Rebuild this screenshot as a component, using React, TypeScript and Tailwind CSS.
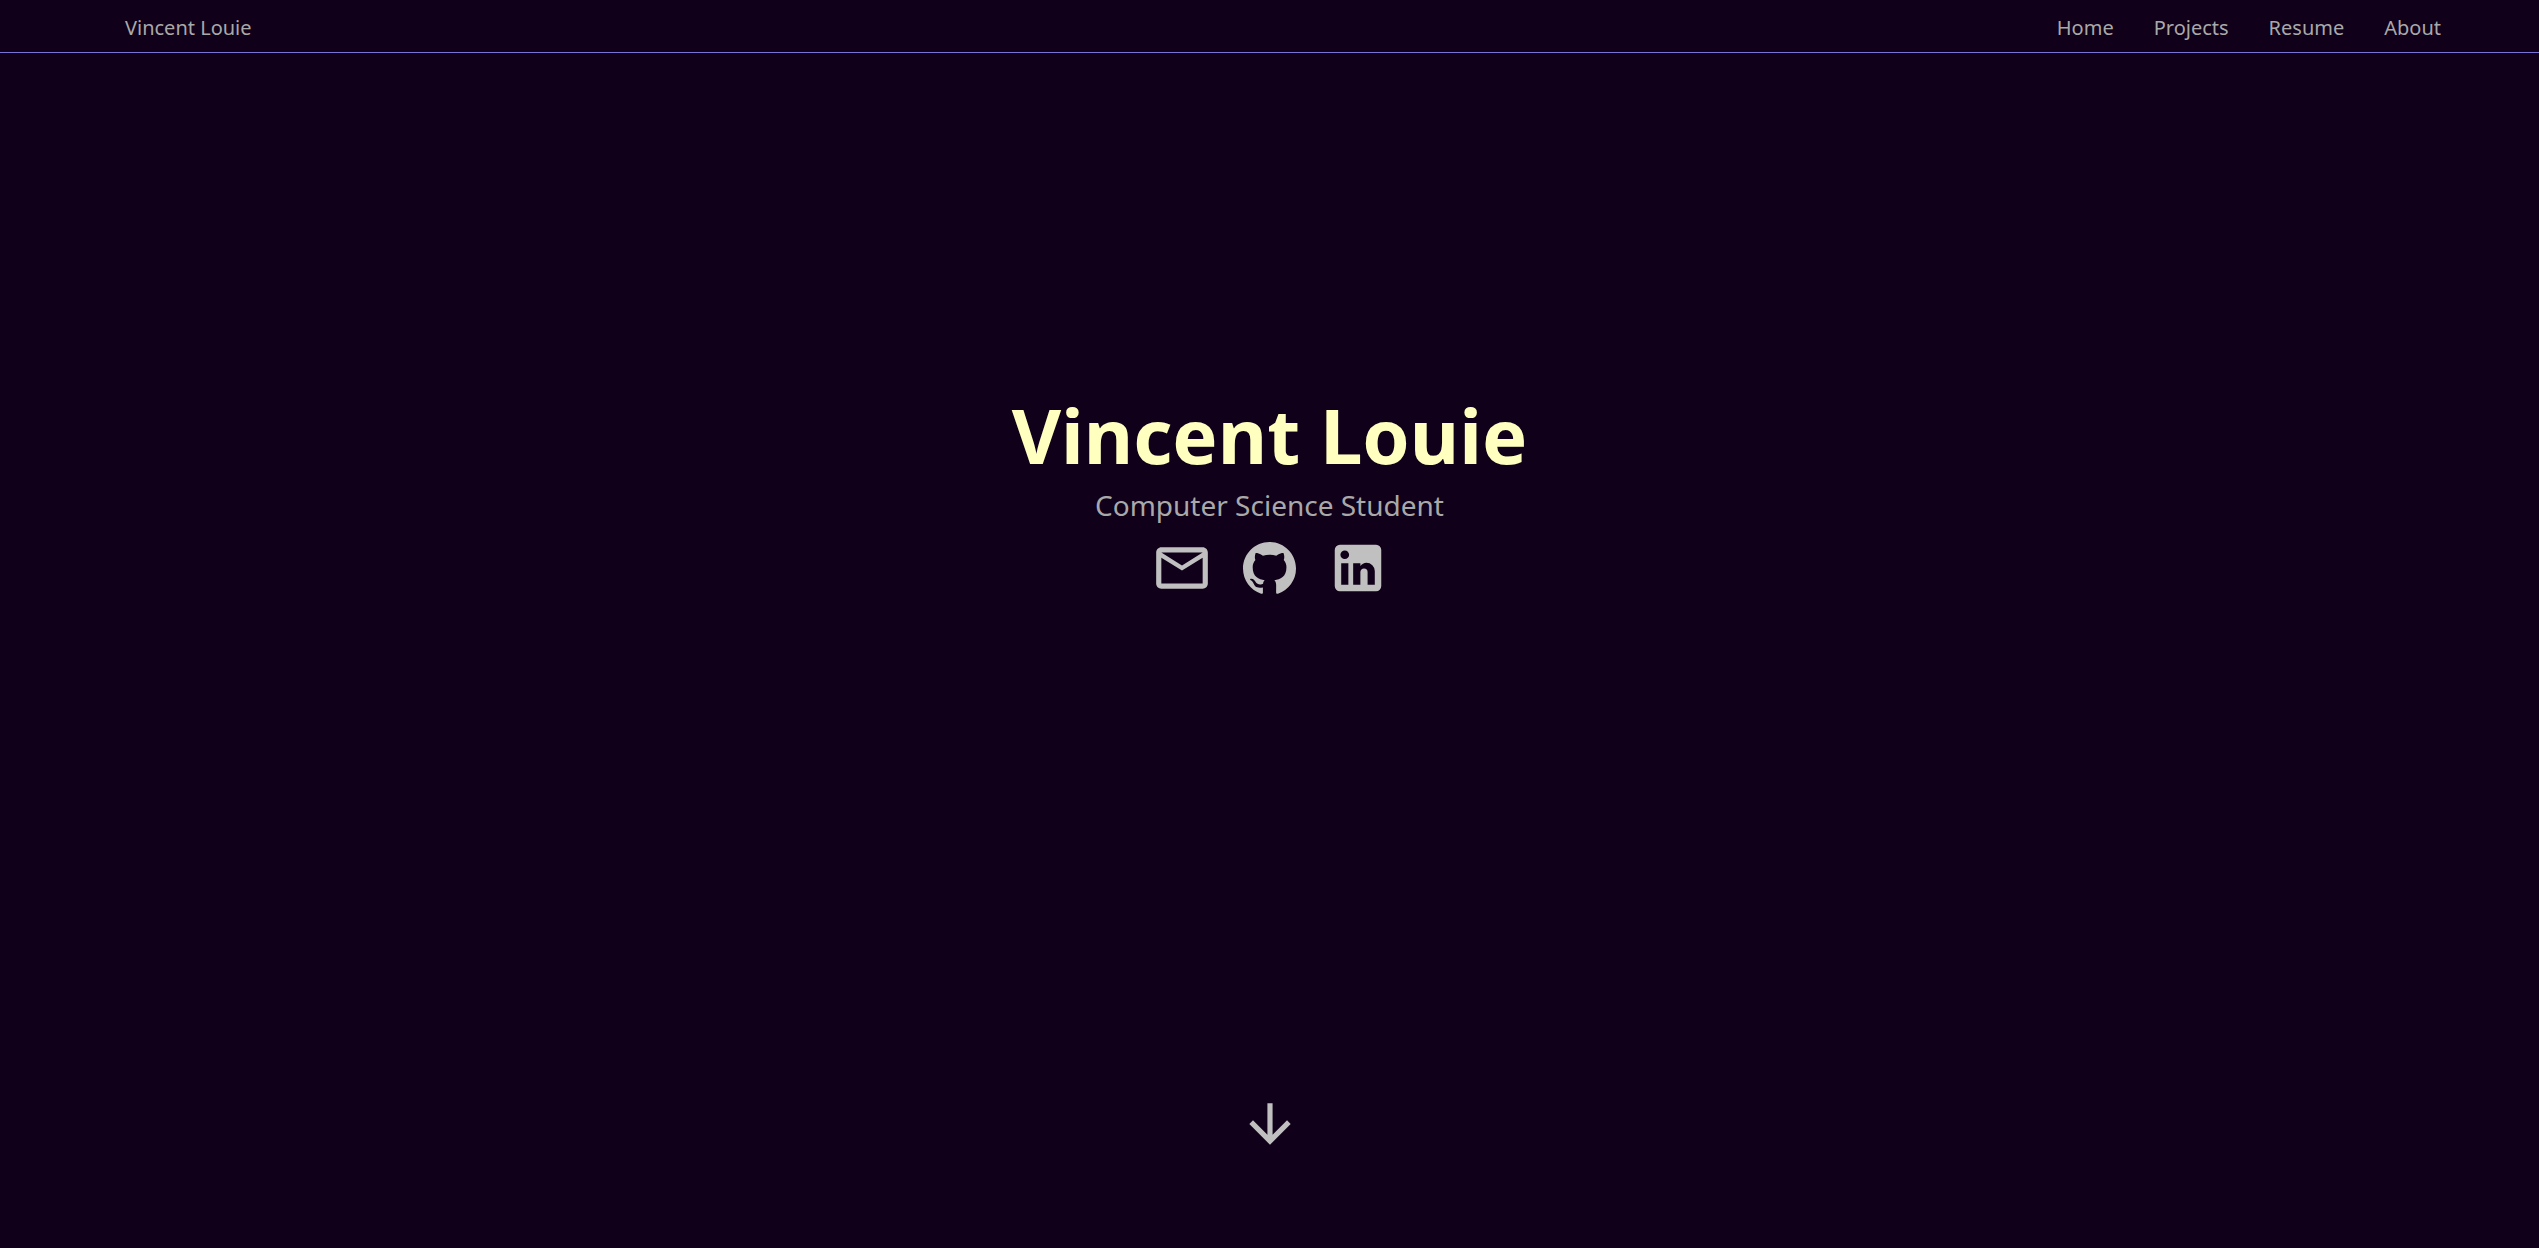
import React from "react";
import { MdMailOutline, MdArrowDownward } from "react-icons/md";
import { BsGithub } from "react-icons/bs";

const links = ["Home", "Projects", "Resume", "About"];

function LinkedinIcon({ className }: { className?: string }) {
  return (
    <svg viewBox="0 0 24 24" fill="currentColor" className={className} aria-hidden="true">
      <path d="M19 3A2 2 0 0 1 21 5V19A2 2 0 0 1 19 21H5A2 2 0 0 1 3 19V5A2 2 0 0 1 5 3H19M18.5 18.5V13.2A3.26 3.26 0 0 0 15.24 9.94C14.39 9.94 13.4 10.46 12.92 11.24V10.13H10.13V18.5H12.92V13.57C12.92 12.8 13.54 12.17 14.31 12.17A1.4 1.4 0 0 1 15.71 13.57V18.5H18.5M6.88 8.56A1.68 1.68 0 0 0 8.56 6.88C8.56 5.95 7.81 5.19 6.88 5.19A1.69 1.69 0 0 0 5.19 6.88C5.19 7.81 5.95 8.56 6.88 8.56M8.27 18.5V10.13H5.5V18.5H8.27Z" />
    </svg>
  );
}

const contacts = [
  { label: "Email", href: "#email", icon: <MdMailOutline className="size-[62px]" /> },
  { label: "GitHub", href: "#github", icon: <BsGithub className="size-[53px]" /> },
  { label: "LinkedIn", href: "#linkedin", icon: <LinkedinIcon className="size-[62px]" /> },
];

export default function App() {
  return (
    <div className="flex min-h-screen flex-col bg-[#10001a] font-['Noto_Sans',sans-serif] text-[#a9a9a9]">
      <header className="flex items-center justify-between border-b border-[#7b72d8] pt-[13px] pr-[98px] pb-[9px] pl-[125px] text-[20px] leading-[30px]">
        <a href="#home">Vincent Louie</a>
        <nav className="flex gap-10">
          {links.map((link) => (
            <a key={link} href={"#" + link.toLowerCase()}>
              {link}
            </a>
          ))}
        </nav>
      </header>
      <main className="flex flex-1 flex-col items-center justify-between pt-[334px] pb-[92px]">
        <section className="flex flex-col items-center">
          <h1 className="text-[76px] leading-[96px] font-bold text-[#ffffbf]">Vincent Louie</h1>
          <p className="text-[28px] leading-[44px]">Computer Science Student</p>
          <div className="mt-[9px] flex gap-6 text-[#c0c0c0]">
            {contacts.map((contact) => (
              <a
                key={contact.label}
                href={contact.href}
                aria-label={contact.label}
                className="flex size-16 items-center justify-center"
              >
                {contact.icon}
              </a>
            ))}
          </div>
        </section>
        <a
          href="#projects"
          aria-label="Scroll down"
          className="flex size-16 items-center justify-center text-[#c0c0c0]"
        >
          <MdArrowDownward className="size-[62px]" />
        </a>
      </main>
    </div>
  );
}
